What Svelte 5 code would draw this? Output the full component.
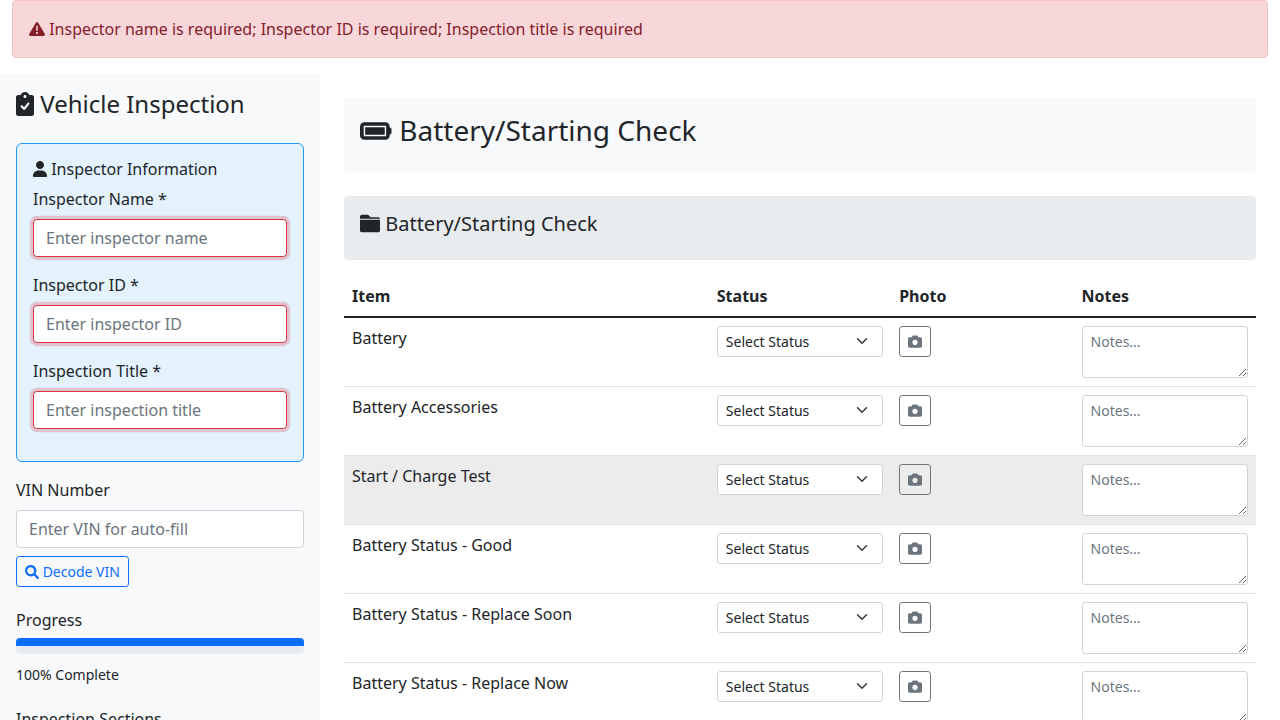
<script>
  const fields = [
    { id: 'inspector-name', label: 'Inspector Name *', hint: 'Enter inspector name' },
    { id: 'inspector-id', label: 'Inspector ID *', hint: 'Enter inspector ID' },
    { id: 'inspection-title', label: 'Inspection Title *', hint: 'Enter inspection title' }
  ];
  const items = [
    'Battery',
    'Battery Accessories',
    'Start / Charge Test',
    'Battery Status - Good',
    'Battery Status - Replace Soon',
    'Battery Status - Replace Now'
  ];
  const active = 2;
  const progress = 100;

  const icons = {
    warning: [512, 'M506.3 417l-213.3-364c-16.33-28-57.54-28-73.98 0l-213.2 364C-10.59 444.9 9.849 480 42.74 480h426.6C502.1 480 522.6 445 506.3 417zM232 168c0-13.25 10.75-24 24-24S280 154.8 280 168v128c0 13.25-10.75 24-23.1 24S232 309.3 232 296V168zM256 416c-17.36 0-31.44-14.08-31.44-31.44c0-17.36 14.07-31.44 31.44-31.44s31.44 14.08 31.44 31.44C287.4 401.9 273.4 416 256 416z'],
    clipboard: [384, 'M336 64h-53.88C268.9 26.8 233.7 0 192 0S115.1 26.8 101.9 64H48C21.5 64 0 85.48 0 112v352C0 490.5 21.5 512 48 512h288c26.5 0 48-21.48 48-48v-352C384 85.48 362.5 64 336 64zM192 64c17.67 0 32 14.33 32 32s-14.33 32-32 32S160 113.7 160 96S174.3 64 192 64zM282.9 262.8l-88 112c-4.1 5.2-10.2 8.4-16.8 8.8C177.6 383.6 177 384 176 384c-6 0-12.1-2.4-16.7-6.8l-56-56c-9.4-9.4-9.4-24.6 0-33.9s24.6-9.4 33.9 0l36.6 36.6l71.4-90.8c8.2-10.4 23.3-12.2 33.7-4C289.3 237.3 291.1 252.4 282.9 262.8z'],
    user: [448, 'M224 256c70.7 0 128-57.31 128-128s-57.3-128-128-128C153.3 0 96 57.31 96 128S153.3 256 224 256zM274.7 304H173.3C77.61 304 0 381.6 0 477.3c0 19.14 15.52 34.67 34.66 34.67h378.7C432.5 512 448 496.5 448 477.3C448 381.6 370.4 304 274.7 304z'],
    search: [512, 'M500.3 443.7l-119.7-119.7c27.22-40.41 40.65-90.9 33.46-144.7C401.8 87.79 326.8 13.32 235.2 1.723C99.01-15.51-15.51 99.01 1.724 235.2c11.6 91.64 86.08 166.7 177.6 178.9c53.8 7.189 104.3-6.236 144.7-33.46l119.7 119.7c15.62 15.62 40.95 15.62 56.57 0C515.9 484.7 515.9 459.3 500.3 443.7zM79.1 208c0-70.58 57.42-128 128-128s128 57.42 128 128c0 70.58-57.42 128-128 128S79.1 278.6 79.1 208z'],
    battery: [576, 'M80 96C35.8 96 0 131.8 0 176V336c0 44.2 35.8 80 80 80H464c44.2 0 80-35.8 80-80V320c17.7 0 32-14.3 32-32V224c0-17.7-14.3-32-32-32V176c0-44.2-35.8-80-80-80H80zM68 160H478V352H68zM94 187H452V325H94z'],
    folder: [512, 'M464 96h-192l-64-64h-160C21.5 32 0 53.5 0 80V134h512C510 110 490 96 464 96zM0 432C0 458.5 21.5 480 48 480h416c26.5 0 48-21.5 48-48V160H0V432z'],
    camera: [512, 'M194.6 32H317.4C338.1 32 356.4 45.22 362.9 64.82L373.3 96H448C483.3 96 512 124.7 512 160V416C512 451.3 483.3 480 448 480H64C28.65 480 0 451.3 0 416V160C0 124.7 28.65 96 64 96H138.7L149.1 64.82C155.6 45.22 173.9 32 194.6 32zM256 384C309 384 352 341 352 288C352 234.1 309 192 256 192C202.1 192 160 234.1 160 288C160 341 202.1 384 256 384z']
  };
</script>

{#snippet icon(name)}
  <svg class="icon {name}" viewBox="0 0 {icons[name][0]} 512" style="width: {icons[name][0] / 512}em" aria-hidden="true">
    <path d={icons[name][1]} fill="currentColor" fill-rule="evenodd" />
  </svg>
{/snippet}

<div class="page">
  <div class="alert" role="alert">
    {@render icon('warning')} Inspector name is required; Inspector ID is required; Inspection title is required
  </div>

  <div class="layout">
    <aside>
      <h4>{@render icon('clipboard')} Vehicle Inspection</h4>

      <section class="inspector">
        <h6>{@render icon('user')} Inspector Information</h6>
        {#each fields as field}
          <div class="field">
            <label for={field.id}>{field.label}</label>
            <input id={field.id} class="control invalid" type="text" placeholder={field.hint} />
          </div>
        {/each}
      </section>

      <div class="vin">
        <label for="vin">VIN Number</label>
        <input id="vin" class="control" type="text" placeholder="Enter VIN for auto-fill" />
        <button class="btn primary">{@render icon('search')} Decode VIN</button>
      </div>

      <div class="progress-group">
        <h6>Progress</h6>
        <div class="progress"><div class="bar" style="width: {progress}%"></div></div>
        <small>{progress}% Complete</small>
      </div>

      <h6>Inspection Sections</h6>
    </aside>

    <main>
      <header class="title"><h3>{@render icon('battery')} Battery/Starting Check</h3></header>
      <div class="category"><h5>{@render icon('folder')} Battery/Starting Check</h5></div>

      <table>
        <thead>
          <tr><th class="item">Item</th><th>Status</th><th>Photo</th><th>Notes</th></tr>
        </thead>
        <tbody>
          {#each items as item, i}
            <tr class:active={i === active}>
              <td>{item}</td>
              <td><select aria-label="Status"><option>Select Status</option></select></td>
              <td><button class="btn secondary" aria-label="Photo">{@render icon('camera')}</button></td>
              <td><textarea rows="2" placeholder="Notes..."></textarea></td>
            </tr>
          {/each}
        </tbody>
      </table>
    </main>
  </div>
</div>

<style>
  :global(body) {
    margin: 0;
    overflow: hidden;
    background: #fff;
  }
  .page, .page * { box-sizing: border-box; }
  .page {
    height: 720px;
    overflow: hidden;
    font: 400 16px/1.5 'Noto Sans', sans-serif;
    color: #212529;
  }
  .icon {
    display: inline-block;
    height: 1em;
    overflow: visible;
    vertical-align: -0.125em;
  }
  .camera, .folder { transform: translateY(0.5px); }
  .battery { margin-right: 0.5px; }
  .alert {
    margin: 0 12px 16px;
    padding: 16px;
    border: 1px solid #f5c2c7;
    border-radius: 4px;
    background: #f8d7da;
    color: #842029;
  }
  .layout {
    display: grid;
    grid-template-columns: 320px 1fr;
  }
  aside {
    padding: 16px;
    background: #f8f9fa;
    min-height: 900px;
  }
  h3, h4, h5, h6 {
    margin: 0 0 8px;
    font-weight: 400;
    line-height: 1.2;
  }
  h3 { font-size: 28px; }
  h4 { font-size: 24px; margin-bottom: 24px; }
  h5 { font-size: 20px; }
  h6 { font-size: 16px; }
  .inspector {
    margin-bottom: 16px;
    padding: 16px;
    border: 1px solid #2196f3;
    border-radius: 6px;
    background: #e3f2fd;
  }
  .field { margin-bottom: 16px; }
  label { display: block; margin-bottom: 8px; }
  input, select, textarea, button { font-family: inherit; line-height: 1.5; margin: 0; }
  .control {
    display: block;
    width: 100%;
    height: 38px;
    padding: 6px 12px;
    border: 1px solid #ced4da;
    border-radius: 4px;
    background: #fff;
    font-size: 16px;
    color: #212529;
  }
  .invalid {
    border-color: #dc3545;
    box-shadow: 0 0 0 3.2px rgba(220, 53, 69, 0.25);
  }
  ::placeholder { color: #6c757d; opacity: 1; }
  .btn {
    display: block;
    padding: 4px 8px;
    border: 1px solid;
    border-radius: 3.2px;
    background: transparent;
    font-size: 14px;
  }
  .primary { margin-top: 8px; color: #0d6efd; }
  .secondary { color: #6c757d; }
  .vin { margin-bottom: 24px; }
  .progress-group { margin-bottom: 24px; }
  .progress {
    height: 16px;
    margin-bottom: 8px;
    overflow: hidden;
    border-radius: 4px;
    background: #e9ecef;
  }
  .bar { height: 8px; background: #0d6efd; }
  small { font-size: 14px; }
  main { padding: 24px; min-width: 0; }
  .title, .category { padding: 16px; border-radius: 4px; }
  .title { margin-bottom: 24px; background: #f8f9fa; }
  .category { margin-bottom: 16px; background: #e9ecef; }
  table {
    width: 100%;
    table-layout: fixed;
    border-collapse: collapse;
  }
  th, td { padding: 8px; vertical-align: top; text-align: left; }
  th { font-weight: 700; }
  .item { width: 40%; }
  thead tr { border-bottom: 2px solid #212529; }
  td { border-bottom: 1px solid #dee2e6; }
  .active { background: rgba(0, 0, 0, 0.075); }
  select, textarea {
    display: block;
    width: 100%;
    padding: 4px 8px;
    border: 1px solid #ced4da;
    border-radius: 3.2px;
    background-color: #fff;
    font-size: 14px;
    color: #212529;
  }
  select {
    appearance: none;
    height: 31px;
    padding-right: 36px;
    background-image: url("data:image/svg+xml,%3Csvg xmlns='http://www.w3.org/2000/svg' viewBox='0 0 16 16'%3E%3Cpath fill='none' stroke='%23343a40' stroke-linecap='round' stroke-linejoin='round' stroke-width='2' d='M2 5l6 6 6-6'/%3E%3C/svg%3E");
    background-repeat: no-repeat;
    background-position: right 12px center;
    background-size: 16px 12px;
  }
  textarea { height: 52px; resize: vertical; }
</style>
